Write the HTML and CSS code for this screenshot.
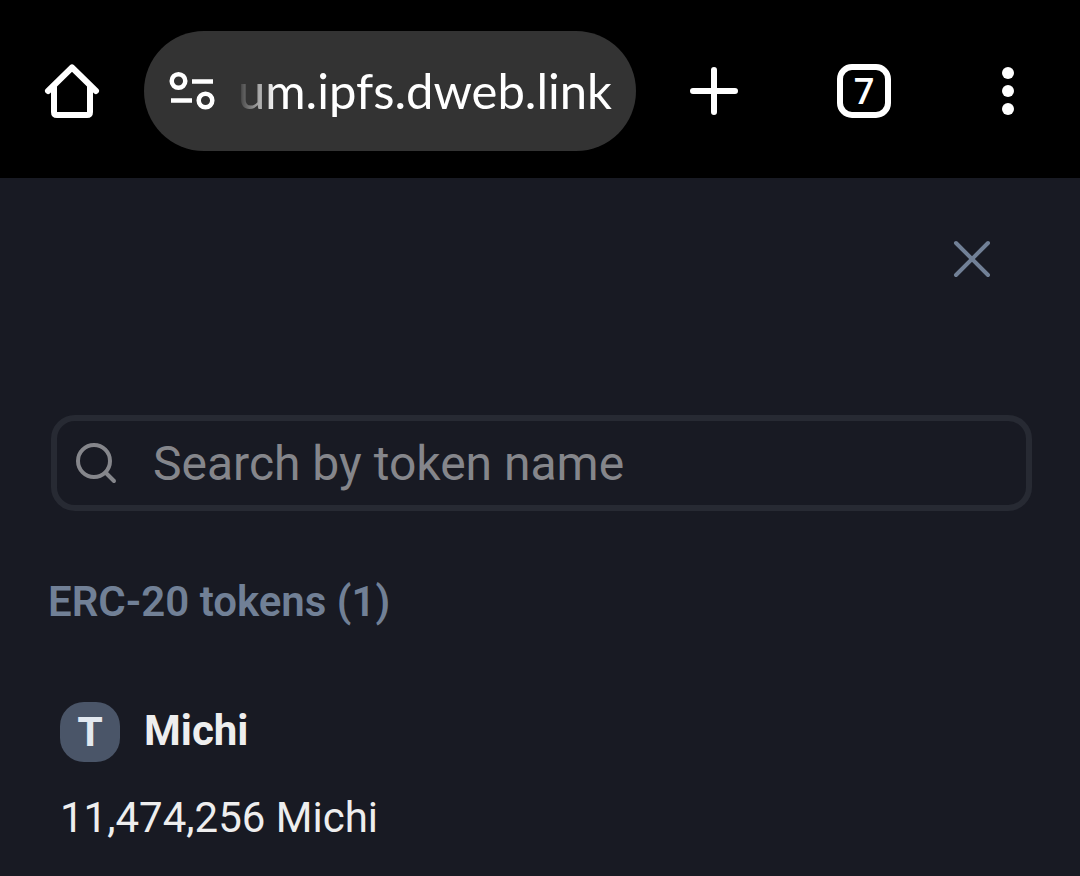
FILE: index.html
```html
<!DOCTYPE html>
<html lang="en">
<head>
<meta charset="utf-8">
<meta name="viewport" content="width=device-width, initial-scale=1">
<title>Tokens</title>
<link rel="stylesheet" href="styles.css">
</head>
<body>
<header class="toolbar">
  <button class="tool" type="button" aria-label="Home">
    <svg width="60" height="60" viewBox="0 0 60 60" fill="none" stroke="#fff" stroke-width="6" stroke-linecap="round" stroke-linejoin="round"><path d="M6 30 30 6.500 54 30"/><path d="M12 26V51Q12 54 15 54H45Q48 54 48 51V26"/></svg>
  </button>
  <div class="address">
    <button class="site-info" type="button" aria-label="Site information">
      <svg width="48" height="42" viewBox="0 0 48 42" fill="none" stroke="#fff" stroke-width="4.500"><circle cx="10.500" cy="11" r="6.800"/><path d="M24 11.500H45M3 30.500H24"/><circle cx="37.500" cy="30.500" r="6.800"/></svg>
    </button>
    <input class="url" type="text" aria-label="Address" value="um.ipfs.dweb.link">
  </div>
  <button class="tool tool-new" type="button" aria-label="New tab">
    <svg width="60" height="60" viewBox="0 0 60 60" stroke="#fff" stroke-width="6" stroke-linecap="round"><path d="M9 30H51M30 9V51"/></svg>
  </button>
  <button class="tool" type="button" aria-label="Open tabs">
    <span class="tab-count">7</span>
  </button>
  <button class="tool" type="button" aria-label="Menu">
    <svg width="60" height="60" viewBox="0 0 60 60" fill="#fff"><circle cx="30" cy="12" r="6"/><circle cx="30" cy="30" r="6"/><circle cx="30" cy="48" r="6"/></svg>
  </button>
</header>
<main class="panel">
  <button class="close" type="button" aria-label="Close">
    <svg width="48" height="48" viewBox="0 0 48 48" stroke="#718096" stroke-width="4" stroke-linecap="round"><path d="M8 8 40 40M40 8 8 40"/></svg>
  </button>
  <label class="search">
    <svg width="48" height="48" viewBox="0 0 48 48" fill="none" stroke="#85868b" stroke-width="4" stroke-linecap="round"><circle cx="21" cy="22" r="16"/><path d="M32.500 33.500 41 42"/></svg>
    <input class="search-input" type="text" aria-label="Search by token name" placeholder="Search by token name">
  </label>
  <h2 class="heading">ERC-20 tokens (1)</h2>
  <section class="token">
    <div class="token-head">
      <span class="avatar">T</span>
      <h3 class="token-name">Michi</h3>
    </div>
    <p class="balance">11,474,256 Michi</p>
  </section>
</main>
</body>
</html>
```
FILE: styles.css
```css
* {
  box-sizing: border-box;
}

body {
  margin: 0;
  min-height: 100vh;
  background: #181a23;
  color: #eeeeee;
  font-family: Roboto, "Liberation Sans", sans-serif;
}

button {
  padding: 0;
  border: 0;
  background: none;
  color: inherit;
  font: inherit;
  cursor: pointer;
}

svg {
  display: block;
}

.toolbar {
  display: flex;
  align-items: center;
  padding: 31px 0 27px;
  background: #000;
}

.tool {
  display: flex;
  flex: none;
  align-items: center;
  justify-content: center;
  width: 144px;
  height: 120px;
}

.tool-new {
  width: 156px;
}

.address {
  display: flex;
  flex: 1;
  align-items: center;
  gap: 16px;
  min-width: 0;
  height: 120px;
  padding: 0 24px;
  border-radius: 60px;
  background: #333;
}

.site-info {
  flex: none;
}

.url {
  flex: 1;
  min-width: 0;
  height: 72px;
  padding: 0 0 2px;
  border: 0;
  outline: 0;
  background: none;
  color: #fff;
  font: 49px Lato, Roboto, sans-serif;
  text-align: right;
  -webkit-mask-image: linear-gradient(to right, transparent 4px, #000 44px);
  mask-image: linear-gradient(to right, transparent 4px, #000 44px);
}

.tab-count {
  display: flex;
  align-items: center;
  justify-content: center;
  width: 54px;
  height: 54px;
  border: 6px solid #fff;
  border-radius: 15px;
  color: #fff;
  font: 600 36px/40px "Open Sans", sans-serif;
}

.panel {
  display: flex;
  flex-direction: column;
  padding: 57px 48px 32px;
}

.close {
  align-self: flex-end;
  margin-right: 36px;
}

.search {
  display: flex;
  align-items: center;
  gap: 32px;
  height: 96px;
  margin: 132px 0 0 3px;
  padding: 0 16px;
  border: 6px solid #272a33;
  border-radius: 24px;
}

.search svg {
  flex: none;
}

.search-input {
  flex: 1;
  min-width: 0;
  padding: 0;
  border: 0;
  outline: 0;
  background: none;
  color: #eeeeee;
  font: 48px Roboto, sans-serif;
}

.search-input::placeholder {
  color: #85868b;
  opacity: 1;
}

.heading {
  margin: 64px 0 0;
  color: #718096;
  font-size: 42px;
  font-weight: 600;
  line-height: 54px;
}

.token {
  padding: 73px 12px 0;
}

.token-head {
  display: flex;
  align-items: flex-start;
  gap: 24px;
}

.avatar {
  display: flex;
  align-items: center;
  justify-content: center;
  width: 60px;
  height: 60px;
  border-radius: 24px;
  background: #4a5568;
  color: #e2e8f0;
  font: bold 40px/60px Inter, sans-serif;
}

.token-name {
  margin: 0;
  font-size: 42px;
  font-weight: 700;
  line-height: 58px;
}

.balance {
  margin: 28px 0 0;
  font-size: 42px;
  line-height: 56px;
}
```
